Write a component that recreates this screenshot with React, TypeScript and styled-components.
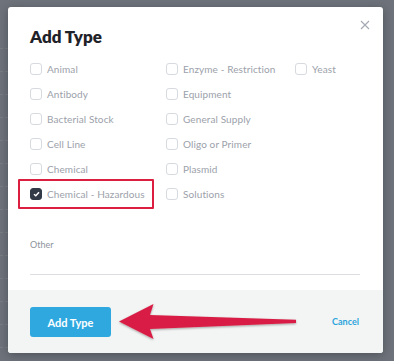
import React from 'react';
import styled, { createGlobalStyle } from 'styled-components';

const GlobalStyle = createGlobalStyle`
  html, body {
    margin: 0;
    padding: 0;
    background: #6e737b;
  }
  body {
    font-family: Lato, "Open Sans", "Liberation Sans", sans-serif;
  }
`;

const Backdrop = styled.div`
  position: relative;
  width: 394px;
  height: 361px;
  overflow: hidden;
  background: #6e737b;
  padding: 7px 0 0 8px;
  box-sizing: border-box;
`;

const PageHint = styled.div`
  position: absolute;
  left: 0;
  top: 0;
  width: 8px;
  height: 361px;
  display: flex;
  flex-direction: column;
  padding-top: 26px;
  & > span {
    display: block;
    height: 22px;
    border-bottom: 1px dashed rgba(255, 255, 255, 0.08);
  }
`;

const Modal = styled.div`
  position: relative;
  width: 375px;
  height: 346px;
  background: #ffffff;
  border-radius: 3px;
  overflow: hidden;
  box-shadow: 0 2px 10px rgba(20, 24, 30, 0.35);
  display: flex;
  flex-direction: column;
`;

const CloseButton = styled.button`
  position: absolute;
  top: 11px;
  right: 11px;
  width: 14px;
  height: 14px;
  padding: 0;
  border: none;
  background: none;
  display: flex;
  align-items: center;
  justify-content: center;
  cursor: pointer;
`;

const Body = styled.div`
  flex: 1;
  padding: 20px 23px 15px 22px;
`;

const Title = styled.h2`
  margin: 0 0 9px;
  font-size: 17px;
  line-height: 20px;
  font-weight: 800;
  color: #1f2228;
`;

const Options = styled.div`
  display: grid;
  grid-template-columns: 136px 129px auto;
  grid-template-rows: repeat(6, 25px);
  grid-auto-flow: column;
`;

const Option = styled.label<{ $highlight?: boolean }>`
  position: relative;
  display: flex;
  align-items: center;
  gap: 5px;
  font-size: 10px;
  letter-spacing: 0.1px;
  color: #9ca1aa;
  cursor: pointer;

  ${({ $highlight }) =>
    $highlight &&
    `
    &::before {
      content: '';
      position: absolute;
      left: -12px;
      top: -2px;
      width: 136px;
      height: 30px;
      border: 2px solid #dc1f41;
      border-radius: 1px;
      box-sizing: border-box;
    }
  `}
`;

const Box = styled.span<{ $checked?: boolean }>`
  width: 12px;
  height: 12px;
  box-sizing: border-box;
  border-radius: 3px;
  border: 1px solid ${({ $checked }) => ($checked ? '#333a47' : '#d7dadf')};
  background: ${({ $checked }) => ($checked ? '#333a47' : '#ffffff')};
  display: flex;
  align-items: center;
  justify-content: center;
  flex-shrink: 0;
`;

const Field = styled.div`
  margin-top: 33px;
`;

const FieldLabel = styled.div`
  font-size: 9px;
  line-height: 12px;
  color: #8d939c;
`;

const FieldInput = styled.input`
  display: block;
  width: 100%;
  height: 23px;
  border: none;
  border-bottom: 1px solid #dcdee2;
  outline: none;
  padding: 0;
  font: inherit;
  background: transparent;
`;

const Footer = styled.div`
  height: 64px;
  background: #f3f4f4;
  display: flex;
  align-items: center;
  justify-content: space-between;
  padding: 0 24px 0 22px;
  box-sizing: border-box;
`;

const PrimaryButton = styled.button`
  width: 81px;
  height: 30px;
  border: none;
  border-radius: 3px;
  background: #2ea8df;
  color: #ffffff;
  font-family: inherit;
  font-size: 11px;
  font-weight: 700;
  cursor: pointer;
  margin-top: 1px;
`;

const LinkButton = styled.button`
  border: none;
  background: none;
  padding: 0;
  color: #2aa5dc;
  font-family: inherit;
  font-size: 9px;
  font-weight: 700;
  cursor: pointer;
`;

const Arrow = styled.svg`
  position: absolute;
  left: 0;
  top: 0;
  pointer-events: none;
`;

const types = [
  'Animal',
  'Antibody',
  'Bacterial Stock',
  'Cell Line',
  'Chemical',
  'Chemical - Hazardous',
  'Enzyme - Restriction',
  'Equipment',
  'General Supply',
  'Oligo or Primer',
  'Plasmid',
  'Solutions',
  'Yeast',
];

const App = () => {
  const checked = 'Chemical - Hazardous';

  return (
    <>
      <GlobalStyle />
      <Backdrop>
        <PageHint>
          {Array.from({ length: 14 }).map((_, i) => (
            <span key={i} />
          ))}
        </PageHint>
        <Modal>
          <CloseButton aria-label="Close">
            <svg width="10" height="10" viewBox="0 0 10 10">
              <path d="M1 1L9 9M9 1L1 9" stroke="#a3a9b2" strokeWidth="1.1" fill="none" />
            </svg>
          </CloseButton>
          <Body>
            <Title>Add Type</Title>
            <Options>
              {types.map((t) => (
                <Option key={t} $highlight={t === checked}>
                  <Box $checked={t === checked}>
                    {t === checked && (
                      <svg width="7" height="6" viewBox="0 0 7 6">
                        <path d="M1 3.2L2.8 4.8L6 1.2" stroke="#ffffff" strokeWidth="1.5" fill="none" />
                      </svg>
                    )}
                  </Box>
                  {t}
                </Option>
              ))}
            </Options>
            <Field>
              <FieldLabel>Other</FieldLabel>
              <FieldInput />
            </Field>
          </Body>
          <Footer>
            <PrimaryButton>Add Type</PrimaryButton>
            <LinkButton>Cancel</LinkButton>
          </Footer>
        </Modal>
        <Arrow width="394" height="361" viewBox="0 0 394 361">
          <defs>
            <filter id="arrowShadow" x="-10%" y="-30%" width="120%" height="160%">
              <feDropShadow dx="0" dy="1" stdDeviation="1.2" floodColor="#000" floodOpacity="0.35" />
            </filter>
          </defs>
          <path
            d="M119 321.5 L153.5 304 L150 315 L296 319.8 L296 323 L150 329 L153.5 339 Z"
            fill="#d81f45"
            filter="url(#arrowShadow)"
          />
        </Arrow>
      </Backdrop>
    </>
  );
};

export default App;
